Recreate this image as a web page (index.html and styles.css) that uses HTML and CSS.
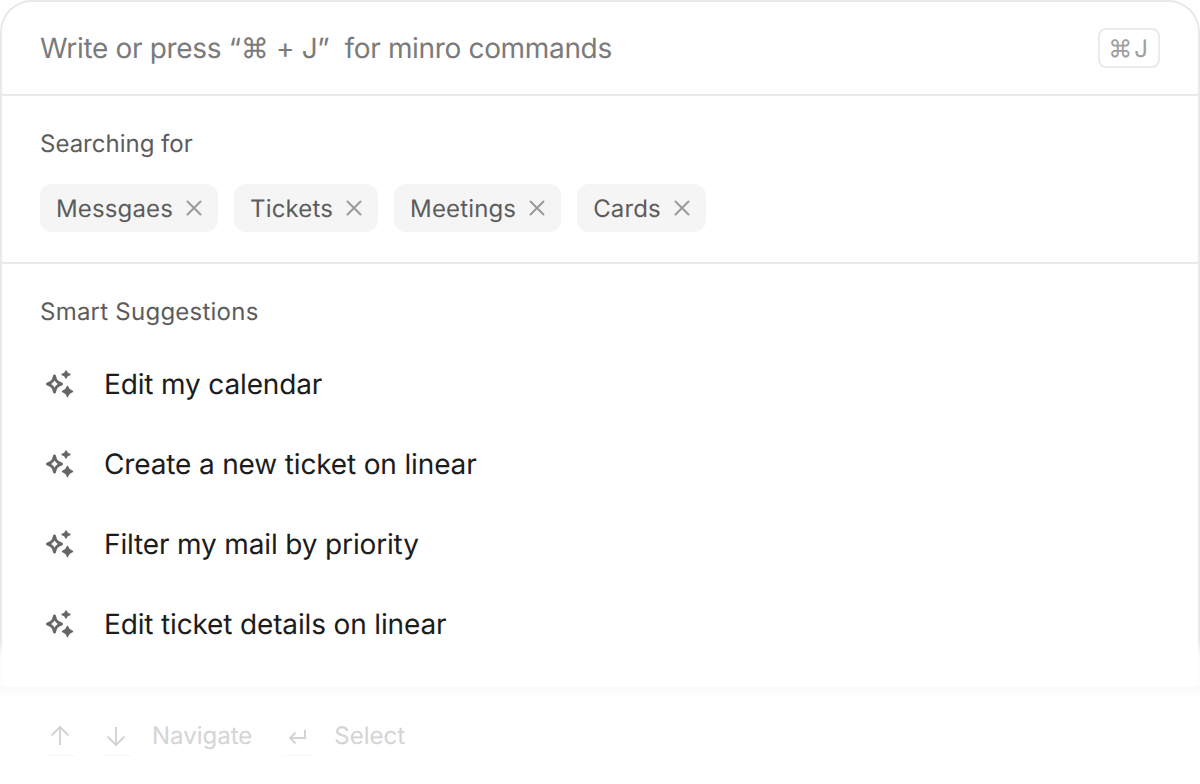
FILE: index.html
```html
<!DOCTYPE html>
<html lang="en">
<head>
    <meta charset="UTF-8">
    <title>Command Menu</title>
    <link rel="stylesheet" href="styles.css">
</head>
<body>
    <svg class="defs" width="0" height="0">
        <symbol id="sparkle" viewBox="0 0 32 32">
            <path d="M10.500 8C11.400 12.800 13 14.800 17.500 16C13 17.200 11.400 19.200 10.500 24C9.600 19.200 8 17.200 3.500 16C8 14.800 9.600 12.800 10.500 8Z" fill="none" stroke="currentColor" stroke-width="3" stroke-linejoin="round"/>
            <path d="M22 3C22.500 5 23.500 6 26 6.500C23.500 7 22.500 8 22 10C21.500 8 20.500 7 18 6.500C20.500 6 21.500 5 22 3Z" fill="currentColor" stroke="currentColor" stroke-width="1.400" stroke-linejoin="round"/>
            <path d="M23.500 18.500C24.200 21 25.500 22.500 28.500 23.500C25.500 24.500 24.200 26 23.500 28.500C22.800 26 21.500 24.500 18.500 23.500C21.500 22.500 22.800 21 23.500 18.500Z" fill="currentColor" stroke="currentColor" stroke-width="1.400" stroke-linejoin="round"/>
        </symbol>
        <symbol id="close" viewBox="0 0 16 16">
            <path d="M1.500 1.500 14.500 14.500M14.500 1.500 1.500 14.500" fill="none" stroke="currentColor" stroke-width="2" stroke-linecap="round"/>
        </symbol>
    </svg>

    <div class="panel">
        <div class="search-row">
            <span class="placeholder">Write or press “⌘ + J”&nbsp; for minro commands</span>
            <span class="shortcut">⌘J</span>
        </div>

        <div class="section section-tags">
            <h3>Searching for</h3>
            <div class="tags">
                <span class="tag">Messgaes <svg class="tag-x"><use href="#close"/></svg></span>
                <span class="tag">Tickets <svg class="tag-x"><use href="#close"/></svg></span>
                <span class="tag">Meetings <svg class="tag-x"><use href="#close"/></svg></span>
                <span class="tag">Cards <svg class="tag-x"><use href="#close"/></svg></span>
            </div>
        </div>

        <div class="section section-suggestions">
            <h3>Smart Suggestions</h3>
            <ul class="suggestions">
                <li><svg class="spark"><use href="#sparkle"/></svg>Edit my calendar</li>
                <li><svg class="spark"><use href="#sparkle"/></svg>Create a new ticket on linear</li>
                <li><svg class="spark"><use href="#sparkle"/></svg>Filter my mail by priority</li>
                <li><svg class="spark"><use href="#sparkle"/></svg>Edit ticket details on linear</li>
            </ul>
        </div>
        <div class="fade"></div>
    </div>

    <div class="footer">
        <span class="key">
            <svg viewBox="0 0 24 24"><path d="M12 21V3M3.500 11.500 12 3l8.500 8.500" /></svg>
        </span>
        <span class="key">
            <svg viewBox="0 0 24 24"><path d="M12 3v18M3.500 12.500 12 21l8.500-8.500" /></svg>
        </span>
        <span class="hint">Navigate</span>
        <span class="key">
            <svg viewBox="0 0 24 24"><path d="M19 6v8H4M9.500 8.500 4 14l5.500 5.500" /></svg>
        </span>
        <span class="hint">Select</span>
    </div>
</body>
</html>
```

FILE: styles.css
```css
* {
    margin: 0;
    padding: 0;
    box-sizing: border-box;
}

body {
    font-family: 'Inter', 'Liberation Sans', sans-serif;
    background: white;
    width: 1200px;
    height: 784px;
    overflow: hidden;
    text-rendering: geometricPrecision;
}

.defs {
    position: absolute;
}

.panel {
    position: relative;
    height: 686px;
    background: white;
    border: 2px solid #e9e9e9;
    border-bottom: none;
    border-radius: 32px 32px 0 0;
}

.search-row {
    height: 92px;
    padding: 0 38px;
    display: flex;
    align-items: center;
    justify-content: space-between;
}

.placeholder {
    color: #7b7b7b;
    font-size: 28px;
    letter-spacing: -0.33px;
}

.shortcut {
    width: 62px;
    height: 40px;
    border: 2px solid #ebebeb;
    border-radius: 8px;
    color: #a0a0a0;
    font-size: 24px;
    letter-spacing: 2px;
    display: flex;
    align-items: center;
    justify-content: center;
}

.section {
    border-top: 2px solid #e9e9e9;
    padding: 32px 38px 0;
}

.section-tags {
    height: 168px;
}

h3 {
    color: #5c5c5c;
    font-size: 24px;
    font-weight: 400;
    line-height: 32px;
}

.section-suggestions h3 {
    letter-spacing: 0.24px;
}

.tags {
    display: flex;
    gap: 16px;
    margin-top: 24px;
}

.tag {
    height: 48px;
    padding: 0 16px;
    background: #f5f5f5;
    border-radius: 12px;
    color: #5c5c5c;
    font-size: 24px;
    letter-spacing: 0.15px;
    display: flex;
    align-items: center;
    gap: 13px;
}

.tag-x {
    width: 16px;
    height: 16px;
    color: #9a9a9a;
}

.suggestions {
    list-style: none;
    margin-top: 16px;
}

.suggestions li {
    height: 80px;
    color: #1c1c1c;
    font-size: 28px;
    letter-spacing: -0.15px;
    display: flex;
    align-items: center;
    gap: 28px;
    padding-left: 4px;
}

.spark {
    width: 32px;
    height: 32px;
    color: #666;
}

/* bottom of the panel washes out into the footer */
.fade {
    position: absolute;
    left: -2px;
    right: -2px;
    top: 638px;
    height: 46px;
    background: linear-gradient(to bottom, rgba(255, 255, 255, 0) 0%, rgba(255, 255, 255, 0.92) 40%);
}

.footer {
    display: flex;
    align-items: center;
    height: 98px;
    padding: 0 40px 0;
    color: #d4d4d4;
    font-size: 24px;
    background: linear-gradient(to bottom, #fbfbfb 0, #fbfbfb 5px, white 12px);
}

.key {
    width: 40px;
    height: 40px;
    margin-top: 1px;
    margin-right: 16px;
    padding-top: 2px;
    border-bottom: 1px dotted #f0f0f0;
    border-radius: 8px;
    display: flex;
    align-items: center;
    justify-content: center;
}

.key svg {
    width: 24px;
    height: 24px;
    fill: none;
    stroke: #d4d4d4;
    stroke-width: 2;
}

.hint {
    margin-right: 26px;
}
```
